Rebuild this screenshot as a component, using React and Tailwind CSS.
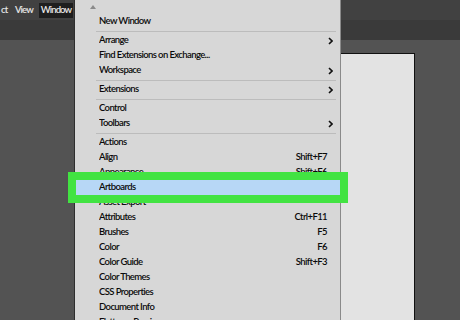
const MENU = [
  { label: 'New Window' },
  { sep: true },
  { label: 'Arrange', sub: true },
  { label: 'Find Extensions on Exchange...' },
  { label: 'Workspace', sub: true },
  { sep: true },
  { label: 'Extensions', sub: true },
  { sep: true },
  { label: 'Control' },
  { label: 'Toolbars', sub: true },
  { sep: true },
  { label: 'Actions' },
  { label: 'Align', keys: 'Shift+F7' },
  { label: 'Appearance', keys: 'Shift+F6' },
  { label: 'Artboards', active: true },
  { label: 'Asset Export' },
  { label: 'Attributes', keys: 'Ctrl+F11' },
  { label: 'Brushes', keys: 'F5' },
  { label: 'Color', keys: 'F6' },
  { label: 'Color Guide', keys: 'Shift+F3' },
  { label: 'Color Themes' },
  { label: 'CSS Properties' },
  { label: 'Document Info' },
  { label: 'Flattener Preview' },
];

function Chevron() {
  return (
    <svg width="5" height="8" viewBox="0 0 5 8" className="shrink-0">
      <polyline points="1,1 4,4 1,7" fill="none" stroke="#111" strokeWidth="1.6" />
    </svg>
  );
}

function MenuRow({ item }) {
  if (item.sep) {
    return (
      <div className="h-[4px] flex items-center pl-[21px] pr-[4px]">
        <div className="h-px w-full bg-[#bcbcbc]" />
      </div>
    );
  }
  return (
    <div className={`h-[15px] flex items-center pl-[24px] ${item.sub ? 'pr-[7px]' : 'pr-[13px]'} ${item.active ? 'bg-[#b7d7f6]' : ''}`}>
      <span className="flex-1 whitespace-nowrap overflow-hidden">{item.label}</span>
      {item.keys && <span className="whitespace-nowrap">{item.keys}</span>}
      {item.sub && <Chevron />}
    </div>
  );
}

export default function App() {
  return (
    <div className="relative w-[460px] h-[320px] overflow-hidden bg-[#535353] font-['Lato','Liberation_Sans',sans-serif] font-semibold tracking-[-0.6px]">
      {/* app menu bar */}
      <div className="h-[20px] bg-[#414141] flex items-center text-[9.5px] text-[#e6e6e6] tracking-[-0.9px]">
        <span className="pl-[1px] w-[15px]">ct</span>
        <span>View</span>
        <span className="ml-[6px] px-[2px] h-[15px] flex items-center bg-[#1e1e1e]">Window</span>
      </div>
      {/* control bar */}
      <div className="h-[20px] bg-[#3a3a3a]" />
      {/* workspace with artboard */}
      <div className="pt-[13px] pl-[150px]">
        <div className="w-[265px] h-[300px] bg-[#e3e3e3] border border-[#111]" />
      </div>

      {/* Window dropdown */}
      <div className="absolute left-[74px] top-0 w-[267px] h-[320px] bg-[#d7d7d7] border-l border-l-[#2e2e2e] border-r border-r-[#8a8a8a] text-[9.5px] text-[#0a0a0a]">
        <div className="h-[14px] pl-[15px] pt-[5px]">
          <div className="w-0 h-0 border-l-[3px] border-r-[3px] border-b-[4px] border-l-transparent border-r-transparent border-b-[#8a8a8a]" />
        </div>
        {MENU.map((item, i) => (
          <MenuRow key={i} item={item} />
        ))}
      </div>

      {/* green callout */}
      <div className="absolute left-[68px] top-[172px] w-[280px] h-[31px] border-[8px] border-[#42e342]" />
    </div>
  );
}
